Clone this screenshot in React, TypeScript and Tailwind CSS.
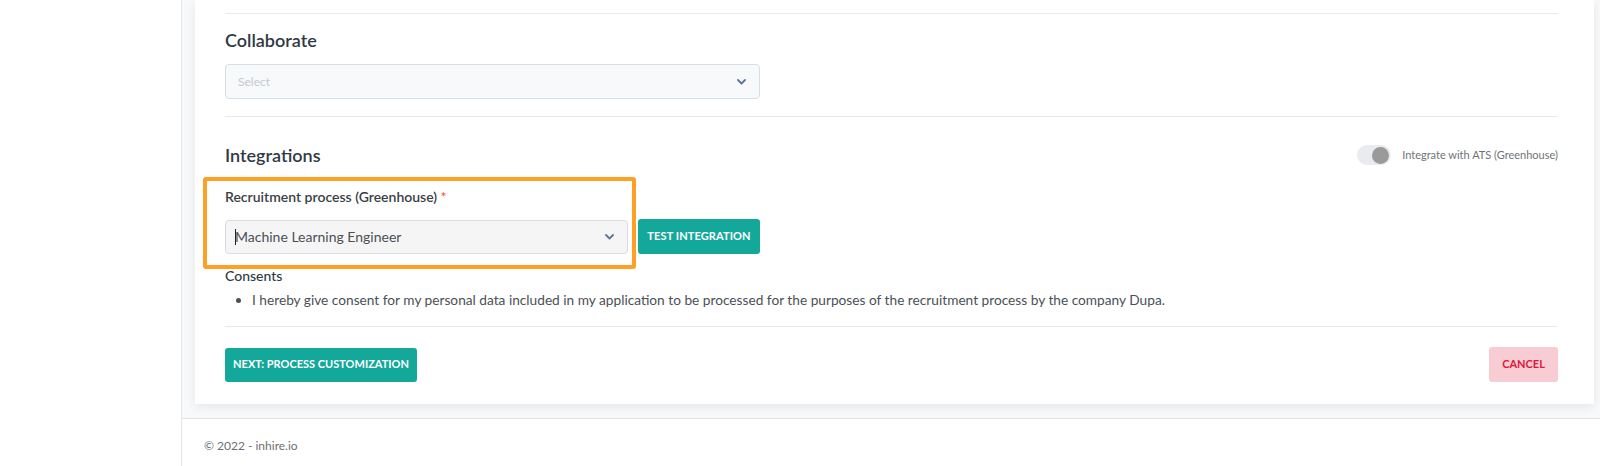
import React from 'react';

const Chevron: React.FC = () => (
  <svg width="9" height="6" viewBox="0 0 9 6" fill="none" className="shrink-0">
    <path d="M1 1l3.5 3.5L8 1" stroke="#5b7797" strokeWidth="1.8" strokeLinecap="round" strokeLinejoin="round" />
  </svg>
);

const App: React.FC = () => {
  return (
    <div className="flex min-h-[466px] w-full font-['Lato',sans-serif] text-[#343a40]">
      {/* Sidebar */}
      <aside className="w-[182px] shrink-0 border-r border-[#e2e5e9] bg-white" />

      <div className="flex flex-1 flex-col bg-[#f8f9fb]">
        <main className="pl-[13px] pr-[6px] pb-[14px]">
          <div className="bg-white pl-[30px] pr-[36px] pt-[13px] pb-[22px] shadow-[0_3px_10px_rgba(0,0,0,0.08)]">
            <div className="border-t border-[#e6e9ed]" />

            {/* Collaborate */}
            <h4 className="mt-[14px] text-[18px] leading-6 font-semibold text-[#2f3a45]">Collaborate</h4>
            <button
              type="button"
              className="mt-[12px] flex h-[35px] w-[535px] items-center justify-between rounded-[4px] border border-[#d6dee6] bg-[#f7f9fb] pl-3 pr-[13px]"
            >
              <span className="text-[12px] text-[#c3c8ce]">Select</span>
              <Chevron />
            </button>

            <div className="mt-[17px] border-t border-[#e6e9ed]" />

            {/* Integrations */}
            <div className="mt-[26px] flex h-6 items-center justify-between">
              <h4 className="text-[18px] leading-6 font-semibold text-[#2f3a45]">Integrations</h4>
              <label className="flex items-center gap-[11px] text-[11px] text-[#6f7378]">
                <span className="flex h-5 w-[34px] items-center justify-end rounded-full bg-[#e9ebee] pr-[2px]">
                  <span className="h-[17px] w-[17px] rounded-full bg-[#9a9a9a]" />
                </span>
                <span>Integrate with ATS (Greenhouse)</span>
              </label>
            </div>

            <div className="relative mt-5">
              <span className="pointer-events-none absolute -left-[22px] -top-[10px] h-[92px] w-[433px] rounded-[3px] border-4 border-[#ffa024]" />
              <p className="text-[14px] leading-5 font-semibold text-[#3a3f45]">
                Recruitment process (Greenhouse) <span className="text-[#f0643c]">*</span>
              </p>
              <div className="mt-3 flex items-center gap-[10px]">
                <button
                  type="button"
                  className="flex h-[34px] w-[403px] items-center justify-between rounded-[4px] border border-[#d9dde2] bg-[#f5f5f6] pl-[9px] pr-[13px]"
                >
                  <span className="flex items-center text-[14px] text-[#4a5056]">
                    <span className="mr-[-1px] inline-block h-[16px] w-px bg-[#222]" />
                    Machine Learning Engineer
                  </span>
                  <Chevron />
                </button>
                <button
                  type="button"
                  className="h-[35px] w-[122px] rounded-[3px] bg-[#14a89a] text-[11px] font-bold tracking-[0.01em] text-white"
                >
                  TEST INTEGRATION
                </button>
              </div>
            </div>

            {/* Consents */}
            <p className="mt-[12px] text-[14px] leading-5 font-medium text-[#2f3a45]">Consents</p>
            <ul className="mt-[4px] list-disc pl-[27px] text-[13.7px] leading-5 text-[#4a5056]">
              <li>
                I hereby give consent for my personal data included in my application to be processed for the purposes of the recruitment process by the company Dupa.
              </li>
            </ul>

            <div className="mt-[16px] border-t border-[#e6e9ed]" />

            <div className="mt-[20px] flex items-center justify-between">
              <button
                type="button"
                className="h-[34px] w-[192px] rounded-[3px] bg-[#14a89a] text-[11px] font-bold text-white"
              >
                NEXT: PROCESS CUSTOMIZATION
              </button>
              <button
                type="button"
                className="h-[35px] w-[69px] rounded-[3px] bg-[#f7ccd2] text-[11px] font-bold text-[#e0163d]"
              >
                CANCEL
              </button>
            </div>
          </div>
        </main>

        <footer className="flex-1 border-t border-[#dfe2e6] bg-white pl-[22px] pt-[17px] text-[12px] leading-5 text-[#6c7075]">
          © 2022 - inhire.io
        </footer>
      </div>
    </div>
  );
};

export default App;
